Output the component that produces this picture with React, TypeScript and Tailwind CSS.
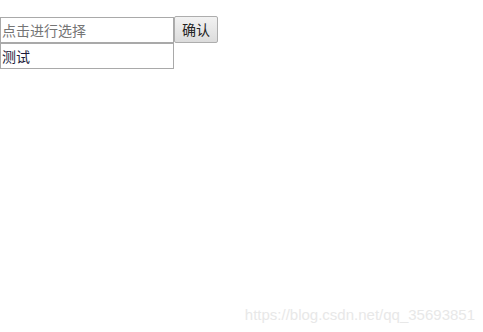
import { useState } from "react";

const font = { fontFamily: '"Microsoft YaHei", "Noto Sans CJK SC", "Liberation Sans", sans-serif' };

export default function App() {
  const [value, setValue] = useState("");

  return (
    <div className="relative w-[483px] h-[332px] bg-white" style={font}>
      <div className="pt-[16px]">
        <div className="flex items-center">
          <input
            value={value}
            onChange={(e) => setValue(e.target.value)}
            placeholder="点击进行选择"
            className="w-[174px] h-[26px] border border-[#a9a9a9] px-[1px] text-[14px] text-[#222] placeholder:text-[#757575] outline-none"
          />
          <button className="w-[44px] h-[27px] border border-[#adadad] rounded-[2px] bg-gradient-to-b from-[#f2f2f2] to-[#dcdcdc] text-[14px] text-[#222]">
            确认
          </button>
        </div>
        <div className="w-[174px] h-[26px] border border-[#a9a9a9] px-[1px] text-[14px] leading-[24px] text-[#1a1a3a]">
          测试
        </div>
      </div>
      <div className="absolute right-[8px] bottom-[6px] text-[15px] text-[#e8e8e8]" style={{ fontFamily: '"Liberation Sans", Arial, sans-serif' }}>
        https://blog.csdn.net/qq_35693851
      </div>
    </div>
  );
}
